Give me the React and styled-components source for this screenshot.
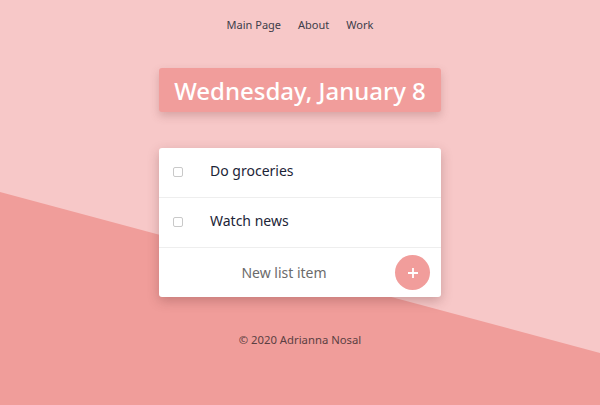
import React from "react";
import styled, { createGlobalStyle } from "styled-components";

const Global = createGlobalStyle`
  html, body { margin: 0; padding: 0; }
  body {
    font-family: "Noto Sans", "Open Sans", sans-serif;
    background: #f7c8c8;
  }
`;

const Page = styled.div`
  position: relative;
  min-height: 405px;
  display: flex;
  flex-direction: column;
  align-items: center;
  overflow: hidden;
  &::before {
    content: "";
    position: absolute;
    inset: 0;
    background: #f09d9a;
    clip-path: polygon(0 192px, 100% 353px, 100% 100%, 0 100%);
    z-index: 0;
  }
  & > * { position: relative; z-index: 1; }
`;

const Nav = styled.nav`
  display: flex;
  gap: 17px;
  margin-top: 17px;
`;

const NavLink = styled.a`
  font-size: 11px;
  line-height: 16px;
  color: #3d3d4a;
  text-decoration: none;
`;

const DateBox = styled.h1`
  margin: 35px 0 0;
  width: 282px;
  height: 44px;
  box-sizing: border-box;
  display: flex;
  align-items: center;
  justify-content: center;
  background: #f19d9b;
  color: #fff;
  font-size: 24px;
  font-weight: 500;
  border-radius: 3px;
  box-shadow: 0 4px 8px rgba(120, 60, 60, 0.25);
`;

const Card = styled.div`
  margin-top: 36px;
  width: 282px;
  background: #fff;
  border-radius: 3px;
  box-shadow: 0 4px 12px rgba(90, 40, 40, 0.28);
`;

const Row = styled.div`
  height: 50px;
  display: flex;
  align-items: center;
  border-bottom: 1px solid #eeeeee;
  box-sizing: border-box;
  padding-left: 14px;
`;

const Check = styled.span`
  width: 8px;
  height: 8px;
  border: 1px solid #c9c9c9;
  border-radius: 2px;
  flex: none;
  margin-top: -2px;
`;

const ItemText = styled.span`
  margin-left: 27px;
  font-size: 14px;
  line-height: 20px;
  margin-top: -3px;
  color: #1c2437;
`;

const NewRow = styled.div`
  height: 49px;
  display: flex;
  align-items: center;
  padding: 0 11px 0 0;
`;

const NewText = styled.span`
  flex: 1;
  text-align: center;
  padding-left: 14px;
  font-size: 14px;
  color: #6b6b6b;
`;

const AddButton = styled.button`
  width: 35px;
  height: 35px;
  border-radius: 50%;
  border: none;
  background: #f19d9b;
  color: #fff;
  display: flex;
  align-items: center;
  justify-content: center;
  padding: 0;
`;

const Footer = styled.footer`
  margin-top: 35px;
  font-size: 11.3px;
  line-height: 16px;
  color: #5b3f42;
`;

export default function App() {
  return (
    <>
      <Global />
      <Page>
        <Nav>
          <NavLink href="#">Main Page</NavLink>
          <NavLink href="#">About</NavLink>
          <NavLink href="#">Work</NavLink>
        </Nav>
        <DateBox>Wednesday, January 8</DateBox>
        <Card>
          <Row>
            <Check />
            <ItemText>Do groceries</ItemText>
          </Row>
          <Row>
            <Check />
            <ItemText>Watch news</ItemText>
          </Row>
          <NewRow>
            <NewText>New list item</NewText>
            <AddButton aria-label="add">
              <svg width="12" height="12" viewBox="0 0 12 12">
                <path d="M6 1v10M1 6h10" stroke="#fff" strokeWidth="1.8" />
              </svg>
            </AddButton>
          </NewRow>
        </Card>
        <Footer>© 2020 Adrianna Nosal</Footer>
      </Page>
    </>
  );
}
